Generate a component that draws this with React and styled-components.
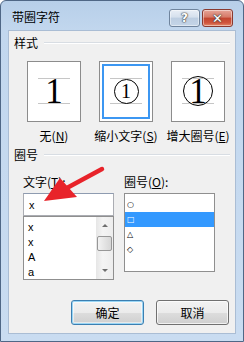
import React from "react";
import styled, { createGlobalStyle } from "styled-components";

const GlobalStyle = createGlobalStyle`
  html, body { margin: 0; padding: 0; width: 244px; height: 342px; overflow: hidden; background: #fff; }
  body { font-family: "Noto Sans CJK SC", "Liberation Sans", sans-serif; font-size: 12px; color: #000; }
  * { box-sizing: border-box; }
`;

const Window = styled.div`
  position: relative;
  width: 244px;
  height: 342px;
  display: flex;
  flex-direction: column;
  border: 1px solid #4f6786;
  border-radius: 6px 6px 0 0;
  background: linear-gradient(180deg, #b7cfe9 0px, #c2d7ee 30px, #c9dcf1 100%);
  padding: 0 7px 7px;
`;

const TitleBar = styled.div`
  height: 29px;
  display: flex;
  align-items: flex-start;
  padding: 8px 3px 0 4px;
`;

const Title = styled.div`
  flex: 1;
  font-size: 12px;
  line-height: 18px;
  margin-top: -1px;
  color: #000;
`;

const CaptionButton = styled.div`
  height: 18px;
  width: ${(p) => p.$w}px;
  margin-left: ${(p) => p.$ml || 0}px;
  border: 1px solid ${(p) => (p.$close ? "#8a3a30" : "#6f849d")};
  border-radius: 3px;
  background: ${(p) =>
    p.$close
      ? "linear-gradient(180deg, #e6a598 0%, #d67967 45%, #c2452f 50%, #d0553d 80%, #e38a6a 100%)"
      : "linear-gradient(180deg, #e8eef6 0%, #d5e0ed 45%, #bccde1 50%, #c4d5e8 100%)"};
  box-shadow: inset 0 0 0 1px rgba(255, 255, 255, 0.45);
  display: flex;
  align-items: center;
  justify-content: center;
  color: #fff;
  font-family: "DejaVu Sans", sans-serif;
  font-weight: bold;
  font-size: ${(p) => (p.$close ? 13 : 12)}px;
  line-height: 1;
  text-shadow: 0 0 1px #3a3a3a, 0 0 1px #3a3a3a, 0 0 2px #555;
`;

const Client = styled.div`
  flex: 1;
  background: #f0f0f0;
  border: 1px solid #aabdd4;
  display: flex;
  flex-direction: column;
`;

const GroupHeader = styled.div`
  display: flex;
  align-items: center;
  height: 14px;
  margin-top: ${(p) => p.$mt}px;
  padding: 0 5px 0 5px;
  line-height: 14px;
  &::after {
    content: "";
    flex: 1;
    margin-left: 6px;
    border-top: 1px solid #d8dde3;
    border-bottom: 1px solid #ffffff;
  }
`;

const StyleRow = styled.div`
  display: grid;
  grid-template-columns: repeat(3, 72px);
  margin-top: 11px;
  padding-left: 9px;
`;

const StyleOption = styled.div`
  display: flex;
  flex-direction: column;
  align-items: center;
`;

const PreviewBox = styled.div`
  width: 54px;
  height: 61px;
  background: #fff;
  border: 1px solid #8c8c8c;
  padding-top: 16px;
  box-shadow: ${(p) => (p.$selected ? "inset 0 0 0 2px #ffffff, inset 0 0 0 4px #3c97f2" : "none")};
`;

const Stage = styled.div`
  width: 32px;
  height: 26px;
  margin: 0 auto;
  border-top: 1px solid #c6c6c6;
  border-bottom: 1px solid #c6c6c6;
  display: flex;
  align-items: center;
  justify-content: center;
`;

const Digit = styled.span`
  font-family: "Liberation Serif", serif;
  font-size: ${(p) => p.$size}px;
  line-height: 1;
  color: #000;
`;

const Ring = styled.span`
  flex: none;
  width: ${(p) => p.$d}px;
  height: ${(p) => p.$d}px;
  border: 1.2px solid #000;
  border-radius: 50%;
  display: flex;
  align-items: center;
  justify-content: center;
`;

const OptionLabel = styled.div`
  margin-top: 7px;
  line-height: 14px;
  white-space: nowrap;
`;

const Key = styled.span`
  text-decoration: underline;
`;

const Fields = styled.div`
  display: flex;
  gap: 10px;
  margin-top: 13px;
  padding-left: 14px;
`;

const Column = styled.div`
  display: flex;
  flex-direction: column;
  width: 91px;
`;

const FieldLabel = styled.div`
  line-height: 14px;
  margin-bottom: 4px;
`;

const TextInput = styled.div`
  height: 23px;
  border: 1px solid #abadb3;
  border-top-color: #8e9bb0;
  background: #fff;
  padding-left: 5px;
  display: flex;
  align-items: center;
  font-family: "Liberation Sans", sans-serif;
  font-size: 11px;
`;

const ListBox = styled.div`
  height: ${(p) => p.$h}px;
  border: 1px solid #8f8f8f;
  background: #fff;
  display: flex;
  padding: 2px 0 0 0;
`;

const Items = styled.div`
  flex: 1;
  display: flex;
  flex-direction: column;
  padding-top: 1px;
`;

const Item = styled.div`
  height: 15px;
  line-height: 15px;
  padding-left: ${(p) => (p.$sym ? 2 : 4)}px;
  font-family: ${(p) => (p.$sym ? '"DejaVu Sans", sans-serif' : '"Liberation Sans", sans-serif')};
  font-size: ${(p) => (p.$sym ? 8 : 11)}px;
  background: ${(p) => (p.$active ? "#3399ff" : "transparent")};
  color: ${(p) => (p.$active ? "#fff" : "#000")};
`;

const ScrollBar = styled.div`
  width: 17px;
  margin-top: -2px;
  background: linear-gradient(90deg, #e6e6e6, #f4f4f4 40%, #ededed);
  display: flex;
  flex-direction: column;
  align-items: center;
`;

const Arrow = styled.div`
  height: 17px;
  width: 17px;
  display: flex;
  align-items: center;
  justify-content: center;
  &::before {
    content: "";
    border-left: 3px solid transparent;
    border-right: 3px solid transparent;
    ${(p) => (p.$down ? "border-top: 3px solid #6e6e6e;" : "border-bottom: 3px solid #6e6e6e;")}
  }
`;

const Thumb = styled.div`
  width: 15px;
  height: 15px;
  border: 1px solid #979797;
  border-radius: 2px;
  background: linear-gradient(90deg, #f3f3f3, #e4e4e4 50%, #d6d6d6);
  margin-top: 2px;
`;

const Track = styled.div`
  flex: 1;
`;

const Buttons = styled.div`
  display: flex;
  justify-content: flex-end;
  gap: 12px;
  margin-top: 20px;
  padding-right: 6px;
`;

const Button = styled.div`
  width: 73px;
  height: 25px;
  border: 1px solid ${(p) => (p.$default ? "#3c7fb1" : "#707070")};
  border-radius: 3px;
  background: linear-gradient(180deg, #f2f2f2 0%, #ebebeb 50%, #dddddd 51%, #cfcfcf 100%);
  box-shadow: ${(p) =>
    p.$default ? "inset 0 0 0 1px #9ad6f5, inset 0 0 0 2px rgba(255,255,255,0.5)" : "inset 0 0 0 1px rgba(255,255,255,0.7)"};
  display: flex;
  align-items: center;
  justify-content: center;
  line-height: 1;
`;

const Annotation = styled.svg`
  position: absolute;
  left: 0;
  top: 0;
  pointer-events: none;
`;

export default function App() {
  return (
    <>
      <GlobalStyle />
      <Window>
        <TitleBar>
          <Title>带圈字符</Title>
          <CaptionButton $w={31}>?</CaptionButton>
          <CaptionButton $w={31} $ml={2} $close>
            ✕
          </CaptionButton>
        </TitleBar>
        <Client>
          <GroupHeader $mt={5}>样式</GroupHeader>
          <StyleRow>
            <StyleOption>
              <PreviewBox>
                <Stage>
                  <Digit $size={35}>1</Digit>
                </Stage>
              </PreviewBox>
              <OptionLabel>
                无(<Key>N</Key>)
              </OptionLabel>
            </StyleOption>
            <StyleOption>
              <PreviewBox $selected>
                <Stage>
                  <Ring $d={25}>
                    <Digit $size={20}>1</Digit>
                  </Ring>
                </Stage>
              </PreviewBox>
              <OptionLabel>
                缩小文字(<Key>S</Key>)
              </OptionLabel>
            </StyleOption>
            <StyleOption>
              <PreviewBox>
                <Stage>
                  <Ring $d={30}>
                    <Digit $size={35}>1</Digit>
                  </Ring>
                </Stage>
              </PreviewBox>
              <OptionLabel>
                增大圈号(<Key>E</Key>)
              </OptionLabel>
            </StyleOption>
          </StyleRow>
          <GroupHeader $mt={5}>圈号</GroupHeader>
          <Fields>
            <Column>
              <FieldLabel>
                文字(<Key>T</Key>):
              </FieldLabel>
              <TextInput>x</TextInput>
              <ListBox $h={64}>
                <Items>
                  <Item>x</Item>
                  <Item>x</Item>
                  <Item>A</Item>
                  <Item>a</Item>
                </Items>
                <ScrollBar>
                  <Arrow />
                  <Thumb />
                  <Track />
                  <Arrow $down />
                </ScrollBar>
              </ListBox>
            </Column>
            <Column>
              <FieldLabel>
                圈号(<Key>O</Key>):
              </FieldLabel>
              <ListBox $h={79}>
                <Items>
                  <Item $sym>○</Item>
                  <Item $sym $active>□</Item>
                  <Item $sym>△</Item>
                  <Item $sym>◇</Item>
                </Items>
              </ListBox>
            </Column>
          </Fields>
          <Buttons>
            <Button $default>确定</Button>
            <Button>取消</Button>
          </Buttons>
        </Client>
        <Annotation width="244" height="342" viewBox="0 0 244 342">
          <line x1="101" y1="168" x2="64" y2="188" stroke="#e8232a" strokeWidth="4.5" strokeLinecap="round" />
          <polygon points="43,200 59,177 76,196" fill="#e8232a" />
        </Annotation>
      </Window>
    </>
  );
}
